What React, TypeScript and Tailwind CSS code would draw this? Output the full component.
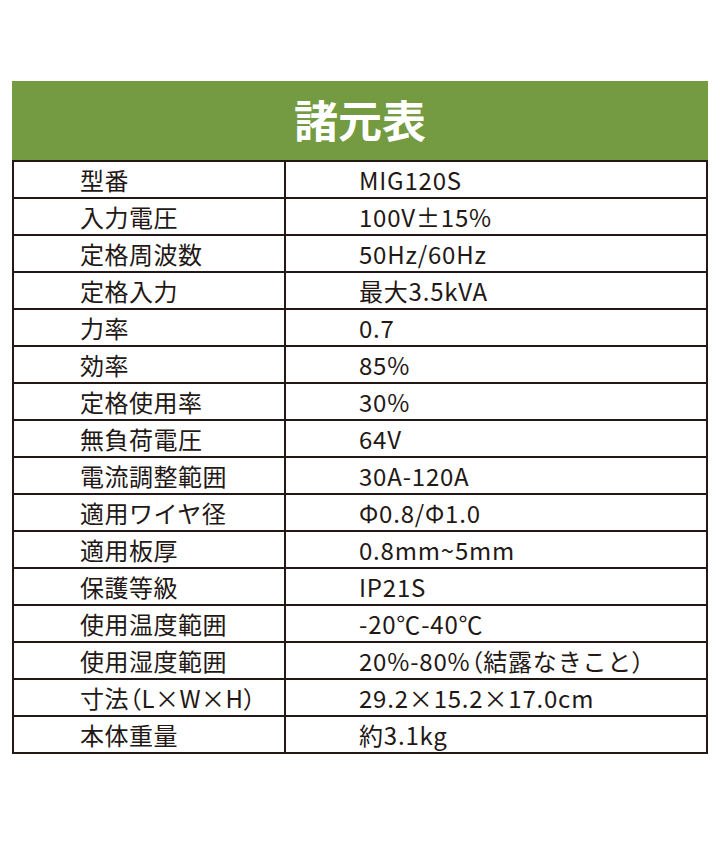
import React from "react";

const P = ({ c }: { c: string }) => (
  <span className="[font-feature-settings:'palt']">{c}</span>
);

const rows: [React.ReactNode, React.ReactNode][] = [
  ["型番", "MIG120S"],
  ["入力電圧", "100V±15%"],
  ["定格周波数", "50Hz/60Hz"],
  ["定格入力", "最大3.5kVA"],
  ["力率", "0.7"],
  ["効率", "85%"],
  ["定格使用率", "30%"],
  ["無負荷電圧", "64V"],
  ["電流調整範囲", "30A-120A"],
  ["適用ワイヤ径", "Φ0.8/Φ1.0"],
  ["適用板厚", "0.8mm~5mm"],
  ["保護等級", "IP21S"],
  ["使用温度範囲", "-20℃-40℃"],
  ["使用湿度範囲", <>20%-80%<P c="（" />結露なきこと<P c="）" /></>],
  [<>寸法<P c="（" />L×W×H<P c="）" /></>, "29.2×15.2×17.0cm"],
  ["本体重量", "約3.1kg"],
];

export default function App() {
  return (
    <div
      className="w-[720px] h-[864px] bg-white pt-[81px] pl-[12px]"
      style={{ fontFamily: '"Noto Sans CJK JP", "Noto Sans", sans-serif' }}
    >
      <div className="w-[696px]">
        <div className="h-[79px] bg-[#749b42] flex items-center justify-center">
          <span className="text-white text-[44px] font-bold leading-none pb-[4px]">
            諸元表
          </span>
        </div>
        <div className="border-2 border-b-0 border-[#231815]">
          {rows.map(([k, v], i) => (
            <div key={i} className="flex h-[37px] border-b-2 border-[#231815] text-[#231815]">
              <div className="w-[272px] border-r-2 border-[#231815] pl-[66px] flex items-center text-[24px] leading-none tracking-[0.5px]">
                {k}
              </div>
              <div className="flex-1 pl-[73px] flex items-center text-[24px] leading-none tracking-[0.8px]">
                {v}
              </div>
            </div>
          ))}
        </div>
      </div>
    </div>
  );
}
